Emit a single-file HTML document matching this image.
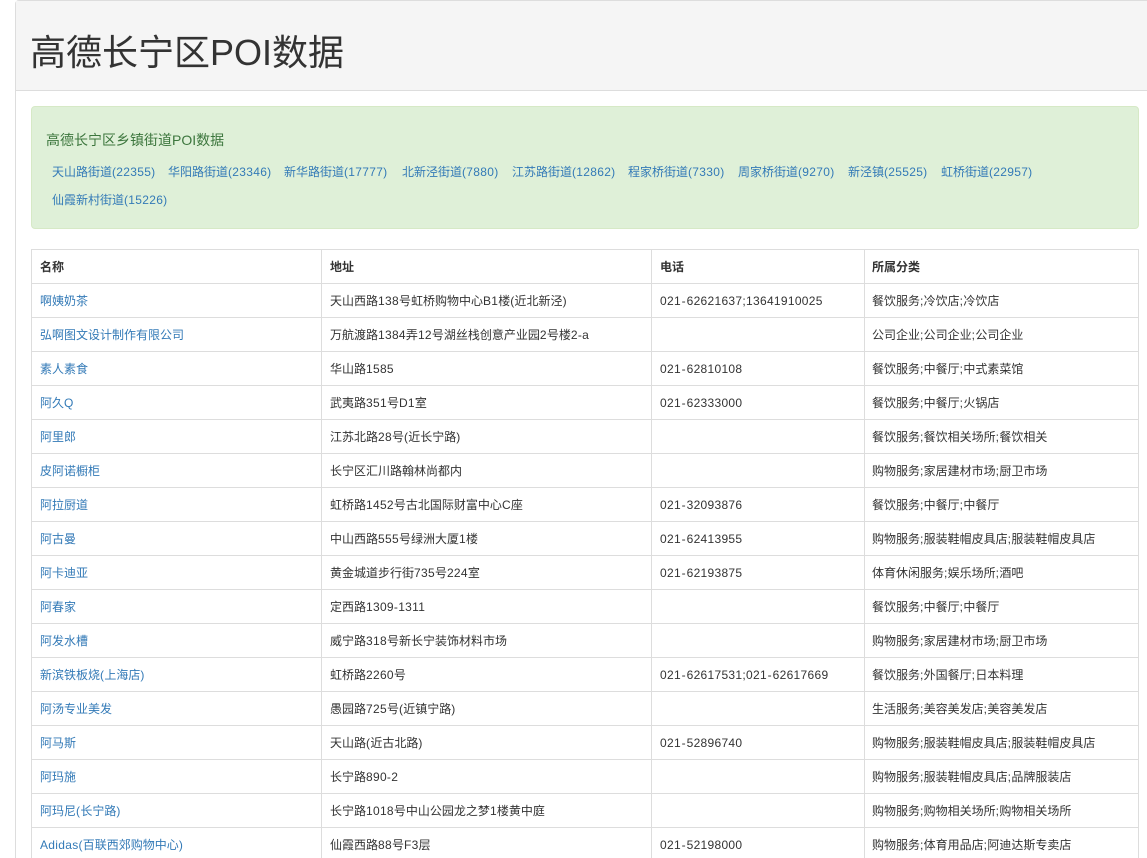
<!DOCTYPE html>
<html lang="zh-CN">
<head>
<meta charset="utf-8">
<title>高德长宁区POI数据</title>
<style>
html,body{margin:0;padding:0;background:#fff;width:1147px;height:858px;overflow:hidden}
body{position:relative;font-family:"Liberation Sans","Noto Sans CJK SC",sans-serif;font-size:12px;color:#333}
a{color:#337ab7;text-decoration:none}
i{font-style:normal;letter-spacing:.3px}
b.h{font-weight:400;letter-spacing:.3px;margin:0 .7px}
.panel{position:absolute;left:15px;top:0;width:1139px;height:900px;box-sizing:border-box;border:1px solid #ddd;border-radius:4px 0 0 0;background:#fff}
.head{position:absolute;left:0;top:0;right:0;height:90px;box-sizing:border-box;background:#f5f5f5;border-bottom:1px solid #ddd}
h1{position:absolute;left:14px;top:27px;margin:0;font-size:36px;font-weight:400;line-height:50px;white-space:nowrap}
.alert{position:absolute;left:31px;top:106px;width:1108px;height:123px;box-sizing:border-box;background:#dff0d8;border:1px solid #d6e9c6;border-radius:4px;color:#3c763d}
.alert span{position:absolute;left:14px;top:23px;font-size:14px;line-height:20px;white-space:nowrap}
.alert a{position:absolute;line-height:20px;white-space:nowrap}
table{position:absolute;left:31px;top:249px;border-collapse:collapse;table-layout:fixed;width:1107px;background:#fff}
th,td{border:1px solid #ddd;padding:9px 8px 7px;height:17px;line-height:17px;text-align:left;white-space:nowrap;overflow:hidden;font-size:12px;box-sizing:content-box}
th{font-weight:700}
th:nth-child(4),td:nth-child(4){padding-left:7px}
</style>
</head>
<body>
<div class="panel"><div class="head"><h1>高德长宁区POI数据</h1></div></div>
<div class="alert">
<span>高德长宁区乡镇街道POI数据</span>
<a style="left:20px;top:55px" href="#">天山路街道<i>(22355)</i></a>
<a style="left:136px;top:55px" href="#">华阳路街道<i>(23346)</i></a>
<a style="left:252px;top:55px" href="#">新华路街道<i>(17777)</i></a>
<a style="left:370px;top:55px" href="#">北新泾街道<i>(7880)</i></a>
<a style="left:480px;top:55px" href="#">江苏路街道<i>(12862)</i></a>
<a style="left:596px;top:55px" href="#">程家桥街道<i>(7330)</i></a>
<a style="left:706px;top:55px" href="#">周家桥街道<i>(9270)</i></a>
<a style="left:816px;top:55px" href="#">新泾镇<i>(25525)</i></a>
<a style="left:909px;top:55px" href="#">虹桥街道<i>(22957)</i></a>
<a style="left:20px;top:83px" href="#">仙霞新村街道<i>(15226)</i></a>
</div>
<table>
<colgroup><col style="width:290px"><col style="width:330px"><col style="width:213px"><col style="width:274px"></colgroup>
<tr><th>名称</th><th>地址</th><th>电话</th><th>所属分类</th></tr>
<tr><td><a href="#">啊姨奶茶</a></td><td>天山西路<i>138</i>号虹桥购物中心<i>B1</i>楼<i>(</i>近北新泾<i>)</i></td><td><i>021<b class="h">-</b>62621637;13641910025</i></td><td>餐饮服务<i>;</i>冷饮店<i>;</i>冷饮店</td></tr>
<tr><td><a href="#">弘啊图文设计制作有限公司</a></td><td>万航渡路<i>1384</i>弄<i>12</i>号湖丝栈创意产业园<i>2</i>号楼<i>2-a</i></td><td></td><td>公司企业<i>;</i>公司企业<i>;</i>公司企业</td></tr>
<tr><td><a href="#">素人素食</a></td><td>华山路<i>1585</i></td><td><i>021<b class="h">-</b>62810108</i></td><td>餐饮服务<i>;</i>中餐厅<i>;</i>中式素菜馆</td></tr>
<tr><td><a href="#">阿久<i>Q</i></a></td><td>武夷路<i>351</i>号<i>D1</i>室</td><td><i>021<b class="h">-</b>62333000</i></td><td>餐饮服务<i>;</i>中餐厅<i>;</i>火锅店</td></tr>
<tr><td><a href="#">阿里郎</a></td><td>江苏北路<i>28</i>号<i>(</i>近长宁路<i>)</i></td><td></td><td>餐饮服务<i>;</i>餐饮相关场所<i>;</i>餐饮相关</td></tr>
<tr><td><a href="#">皮阿诺橱柜</a></td><td>长宁区汇川路翰林尚都内</td><td></td><td>购物服务<i>;</i>家居建材市场<i>;</i>厨卫市场</td></tr>
<tr><td><a href="#">阿拉厨道</a></td><td>虹桥路<i>1452</i>号古北国际财富中心<i>C</i>座</td><td><i>021<b class="h">-</b>32093876</i></td><td>餐饮服务<i>;</i>中餐厅<i>;</i>中餐厅</td></tr>
<tr><td><a href="#">阿古曼</a></td><td>中山西路<i>555</i>号绿洲大厦<i>1</i>楼</td><td><i>021<b class="h">-</b>62413955</i></td><td>购物服务<i>;</i>服装鞋帽皮具店<i>;</i>服装鞋帽皮具店</td></tr>
<tr><td><a href="#">阿卡迪亚</a></td><td>黄金城道步行街<i>735</i>号<i>224</i>室</td><td><i>021<b class="h">-</b>62193875</i></td><td>体育休闲服务<i>;</i>娱乐场所<i>;</i>酒吧</td></tr>
<tr><td><a href="#">阿春家</a></td><td>定西路<i>1309-1311</i></td><td></td><td>餐饮服务<i>;</i>中餐厅<i>;</i>中餐厅</td></tr>
<tr><td><a href="#">阿发水槽</a></td><td>威宁路<i>318</i>号新长宁装饰材料市场</td><td></td><td>购物服务<i>;</i>家居建材市场<i>;</i>厨卫市场</td></tr>
<tr><td><a href="#">新滨铁板烧<i>(</i>上海店<i>)</i></a></td><td>虹桥路<i>2260</i>号</td><td><i>021<b class="h">-</b>62617531;021<b class="h">-</b>62617669</i></td><td>餐饮服务<i>;</i>外国餐厅<i>;</i>日本料理</td></tr>
<tr><td><a href="#">阿汤专业美发</a></td><td>愚园路<i>725</i>号<i>(</i>近镇宁路<i>)</i></td><td></td><td>生活服务<i>;</i>美容美发店<i>;</i>美容美发店</td></tr>
<tr><td><a href="#">阿马斯</a></td><td>天山路<i>(</i>近古北路<i>)</i></td><td><i>021<b class="h">-</b>52896740</i></td><td>购物服务<i>;</i>服装鞋帽皮具店<i>;</i>服装鞋帽皮具店</td></tr>
<tr><td><a href="#">阿玛施</a></td><td>长宁路<i>890-2</i></td><td></td><td>购物服务<i>;</i>服装鞋帽皮具店<i>;</i>品牌服装店</td></tr>
<tr><td><a href="#">阿玛尼<i>(</i>长宁路<i>)</i></a></td><td>长宁路<i>1018</i>号中山公园龙之梦<i>1</i>楼黄中庭</td><td></td><td>购物服务<i>;</i>购物相关场所<i>;</i>购物相关场所</td></tr>
<tr><td><a href="#"><i>Adidas(</i>百联西郊购物中心<i>)</i></a></td><td>仙霞西路<i>88</i>号<i>F3</i>层</td><td><i>021<b class="h">-</b>52198000</i></td><td>购物服务<i>;</i>体育用品店<i>;</i>阿迪达斯专卖店</td></tr>
</table>
</body>
</html>
